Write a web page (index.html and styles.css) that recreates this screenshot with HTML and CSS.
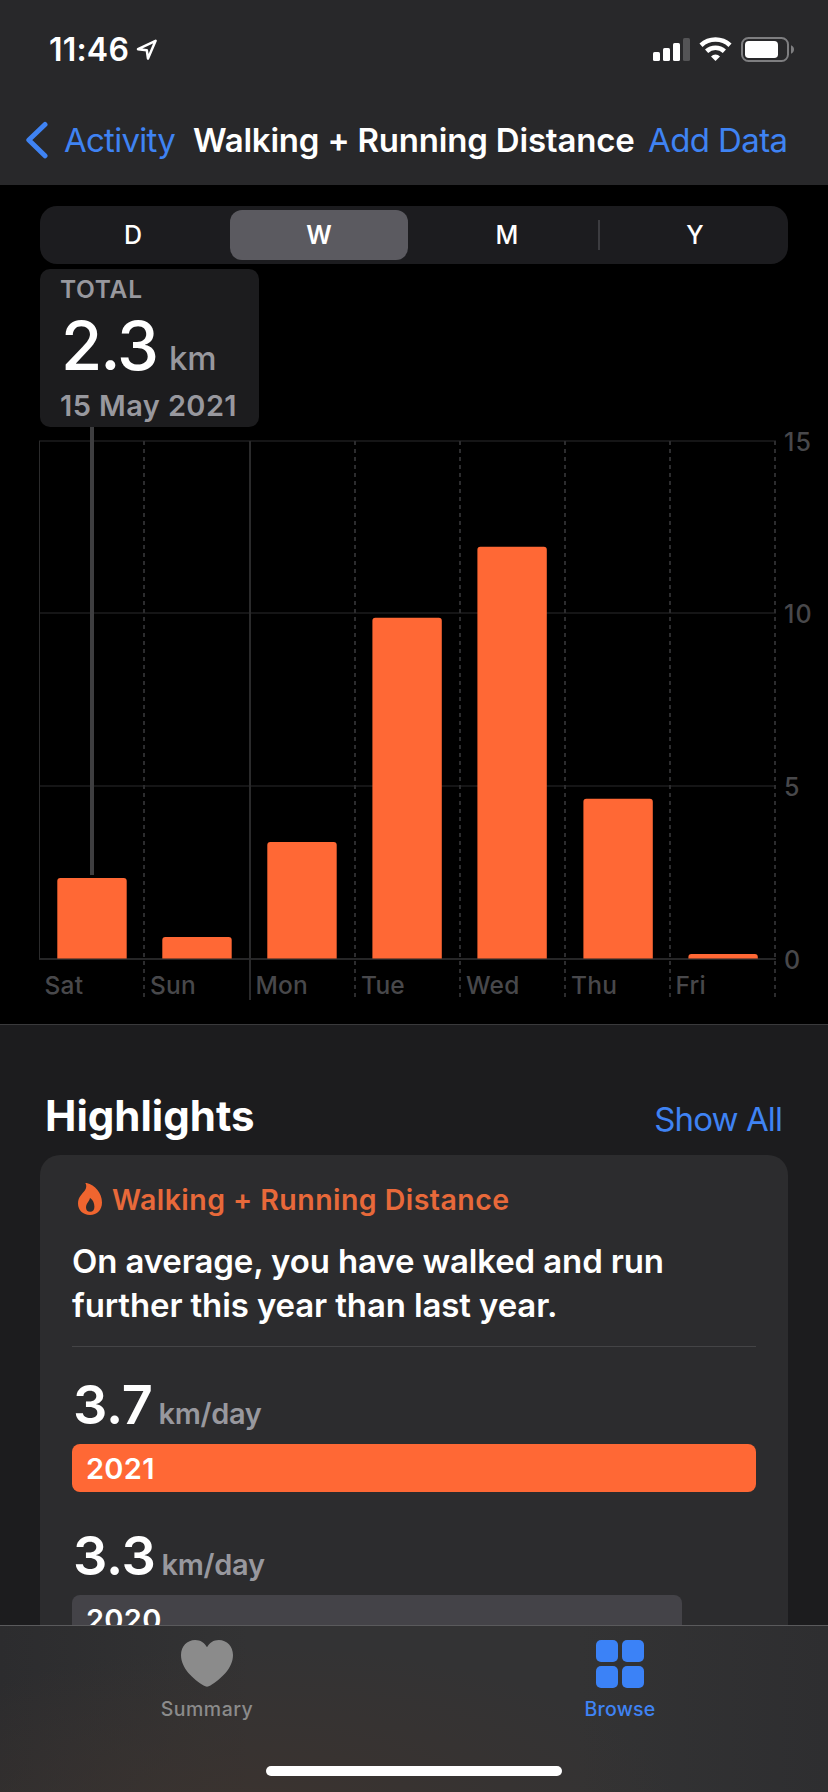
FILE: index.html
```html
<!DOCTYPE html>
<html lang="en">

<head>
    <meta charset="UTF-8">
    <meta name="viewport" content="width=device-width, initial-scale=1.0">
    <title>Walking + Running Distance</title>
    <link rel="stylesheet" href="styles.css">
</head>

<body>
    <header class="header">
        <div class="status-bar">
            <span class="time">11:46</span>
            <svg class="location" width="22" height="22" viewBox="0 0 22 22">
                <path d="M2 10.2 L19.6 1.8 L12 19.6 L10.8 11.2 Z" fill="none" stroke="#fff" stroke-width="2.5" stroke-linejoin="round" />
            </svg>
            <svg class="status-icons" width="144" height="27" viewBox="0 0 144 27">
                <g fill="#fff">
                    <rect x="1" y="16" width="7" height="9" rx="1.6" />
                    <rect x="11" y="12" width="7" height="13" rx="1.6" />
                    <rect x="21" y="7" width="7" height="18" rx="1.6" />
                    <rect x="31" y="2" width="7" height="23" rx="1.6" fill="#545456" />
                </g>
                <g fill="none" stroke="#fff" stroke-width="4.6">
                    <path d="M49 9.2 A21.5 21.5 0 0 1 78 9.2" />
                    <path d="M54.6 15.2 A13 13 0 0 1 72.4 15.2" />
                </g>
                <path d="M63.5 25 L59 20.4 A6.5 6.5 0 0 1 68 20.4 Z" fill="#fff" />
                <rect x="90" y="2" width="46" height="23" rx="6.5" fill="none" stroke="#7e7e80" stroke-width="2" />
                <rect x="93" y="5" width="33" height="17" rx="3.8" fill="#fff" />
                <path d="M139 9.3 Q142 10.6 142 13.5 Q142 16.4 139 17.7 Z" fill="#7e7e80" />
            </svg>
        </div>
        <nav class="nav">
            <svg class="chevron" width="24" height="40" viewBox="0 0 24 40">
                <path d="M21 4.5 L4.8 20 L21 35.8" fill="none" stroke="#3f83f3" stroke-width="5" stroke-linecap="round" stroke-linejoin="round" />
            </svg>
            <a class="link back">Activity</a>
            <h1 class="title">Walking + Running Distance</h1>
            <a class="link add">Add Data</a>
        </nav>
    </header>

    <main class="content">
        <section class="chart-section">
            <div class="segmented">
                <span class="segment">D</span>
                <span class="segment selected">W</span>
                <span class="segment">M</span>
                <span class="divider"></span>
                <span class="segment">Y</span>
            </div>

            <div class="summary">
                <div class="summary-label">TOTAL</div>
                <div class="summary-value">2.3<span class="summary-unit">km</span></div>
                <div class="summary-date">15 May 2021</div>
            </div>

            <svg class="chart" width="828" height="597" viewBox="0 427 828 597">
                <g class="grid-line">
                    <path d="M39 441 H776" />
                    <path d="M39 613 H776" />
                    <path d="M39 786 H776" />
                    <path class="base" d="M39 959 H776" />
                    <path class="edge" d="M39.5 441 V959" />
                </g>
                <path class="week-line" d="M250 441 V1000" />
                <g class="day-line">
                    <path d="M144 441 V997" />
                    <path d="M355 441 V997" />
                    <path d="M460 441 V997" />
                    <path d="M565 441 V997" />
                    <path d="M670 441 V997" />
                    <path d="M775 441 V997" />
                </g>
                <path class="marker" d="M92 427 V875" />
                <g class="bars">
                    <path d="M57.3 958.5 V881 q0 -3 3 -3 h63.4 q3 0 3 3 V958.5 Z" />
                    <path d="M162.3 958.5 V940 q0 -3 3 -3 h63.4 q3 0 3 3 V958.5 Z" />
                    <path d="M267.3 958.5 V845 q0 -3 3 -3 h63.4 q3 0 3 3 V958.5 Z" />
                    <path d="M372.4 958.5 V620.7 q0 -3 3 -3 h63.4 q3 0 3 3 V958.5 Z" />
                    <path d="M477.4 958.5 V549.7 q0 -3 3 -3 h63.4 q3 0 3 3 V958.5 Z" />
                    <path d="M583.4 958.5 V801.8 q0 -3 3 -3 h63.4 q3 0 3 3 V958.5 Z" />
                    <path d="M688.4 958.5 V957 q0 -3 3 -3 h63.4 q3 0 3 3 V958.5 Z" />
                </g>
                <g class="axis-label">
                    <text x="44.5" y="993.5">Sat</text>
                    <text x="150" y="993.5">Sun</text>
                    <text x="255.5" y="993.5">Mon</text>
                    <text x="361" y="993.5">Tue</text>
                    <text x="466" y="993.5">Wed</text>
                    <text x="571" y="993.5">Thu</text>
                    <text x="675.5" y="993.5">Fri</text>
                </g>
                <g class="axis-label axis-value">
                    <text x="784" y="451">15</text>
                    <text x="784" y="623">10</text>
                    <text x="784" y="796">5</text>
                    <text x="784" y="968.7">0</text>
                </g>
            </svg>
        </section>

        <section class="highlights">
            <div class="highlights-head">
                <h2>Highlights</h2>
                <a class="link show-all">Show All</a>
            </div>
            <div class="card">
                <div class="card-title">
                    <svg class="flame" width="24" height="32" viewBox="0 0 24 32">
                        <path fill-rule="evenodd" d="M7.6 0.6 C7 0 7.8 -0.1 8.6 0.1 C17 2.2 24 10.2 24 19.6 C24 27 19.2 32 12 32 C4.8 32 0 27.2 0 20.6 C0 13.5 4.6 10.8 7 7.2 C8.5 4.8 8.6 2.6 7.6 0.6 Z M12.4 15.2 C12 15 11.8 15.2 11.8 15.6 C11.4 18.6 8 20.4 8 24.4 C8 27.2 9.6 28.8 12.2 28.8 C14.8 28.8 16.4 27 16.4 23.8 C16.4 20 15 16.8 12.4 15.2 Z" fill="#f0652f" />
                    </svg>
                    <span>Walking + Running Distance</span>
                </div>
                <p class="card-text">On average, you have walked and run<br>further this year than last year.</p>
                <div class="stat">
                    <div class="stat-value">3.7<span class="stat-unit">km/day</span></div>
                    <div class="stat-bar current">2021</div>
                </div>
                <div class="stat">
                    <div class="stat-value">3.3<span class="stat-unit">km/day</span></div>
                    <div class="stat-bar previous">2020</div>
                </div>
            </div>
        </section>
    </main>

    <footer class="tab-bar">
        <div class="tabs">
            <div class="tab">
                <svg width="52" height="48" viewBox="0 0 52 48">
                    <path d="M26 7.2 C28.4 2.8 32.6 0 37.8 0 C46 0 52 6.4 52 15 C52 28.6 39.6 39 29.4 45.6 C27.2 47 24.8 47 22.6 45.6 C12.4 39 0 28.6 0 15 C0 6.4 6 0 14.2 0 C19.4 0 23.6 2.8 26 7.2 Z" fill="#8b8b8b" />
                </svg>
                <span>Summary</span>
            </div>
            <div class="tab active">
                <svg width="48" height="48" viewBox="0 0 48 48" fill="#3b82f7">
                    <rect width="22" height="22" rx="5" />
                    <rect x="26" width="22" height="22" rx="5" />
                    <rect y="26" width="22" height="22" rx="5" />
                    <rect x="26" y="26" width="22" height="22" rx="5" />
                </svg>
                <span>Browse</span>
            </div>
        </div>
        <div class="home-indicator"></div>
    </footer>
</body>

</html>
```
FILE: styles.css
```css
* {
    box-sizing: border-box;
}

body {
    margin: 0;
    width: 828px;
    height: 1792px;
    overflow: hidden;
    display: flex;
    flex-direction: column;
    background-color: #1c1c1e;
    color: #fff;
    font-family: Inter, "Liberation Sans", sans-serif;
}

h1,
h2,
p {
    margin: 0;
}

svg {
    display: block;
    flex: none;
}

.link {
    color: #3f83f3;
    font-size: 33px;
    letter-spacing: -0.75px;
}

/* Header */
.header {
    flex: none;
    height: 185px;
    background-color: #28282a;
}

.status-bar {
    display: flex;
    align-items: center;
    height: 95px;
    padding: 4px 32px 0 49px;
}

.time {
    width: 87px;
    font-size: 32px;
    font-weight: 600;
    letter-spacing: 0.2px;
}

.status-icons {
    margin-left: auto;
}

.nav {
    display: grid;
    grid-template-columns: 40px 129px 455px auto;
    align-items: center;
    height: 90px;
    padding-left: 24px;
    white-space: nowrap;
}

.title {
    font-size: 33px;
    font-weight: 600;
    letter-spacing: -0.2px;
}

.add {
    letter-spacing: -0.6px;
}

/* Chart */
.chart-section {
    height: 839px;
    padding-top: 21px;
    background-color: #000;
}

.segmented {
    display: flex;
    align-items: center;
    width: 748px;
    height: 58px;
    margin: 0 40px 5px;
    border-radius: 17px;
    background-color: #1c1c1f;
}

.segment {
    flex: 1;
    height: 50px;
    line-height: 50px;
    text-align: center;
    font-size: 25px;
    font-weight: 500;
}

.selected {
    flex: none;
    width: 178px;
    margin: 0 6px 0 4px;
    border-radius: 12px;
    background-color: #5b5a60;
    font-weight: 600;
}

.divider {
    width: 2px;
    height: 30px;
    margin: 0 2px 0 -2px;
    background-color: #3c3c40;
}

.summary {
    width: 219px;
    height: 158px;
    margin-left: 40px;
    padding-left: 20px;
    border-radius: 10px;
    background-color: #1c1c1e;
    color: #98989e;
    font-weight: 500;
    white-space: nowrap;
}

.summary-label {
    font-size: 24.5px;
    font-weight: 600;
    line-height: 40px;
    letter-spacing: 0.7px;
}

.summary-value {
    display: flex;
    align-items: baseline;
    height: 72px;
    padding-left: 1px;
    line-height: 73px;
    font-size: 67px;
    letter-spacing: -2px;
    color: #fff;
}

.summary-unit {
    margin-left: 12px;
    font-size: 33px;
    letter-spacing: -0.2px;
    color: #98989e;
}

.summary-date {
    font-size: 29px;
    font-weight: 600;
    line-height: 49px;
    letter-spacing: 0.4px;
}

.grid-line path {
    stroke: #151516;
    stroke-width: 2;
}

.grid-line .base {
    stroke: #262627;
}

.grid-line .edge {
    stroke: #2b2b2c;
    stroke-width: 1;
}

.week-line {
    stroke: #2a2a2b;
    stroke-width: 2;
}

.day-line path {
    stroke: #2c2c2e;
    stroke-width: 2;
    stroke-dasharray: 4 4;
}

.marker {
    stroke: #3e3e40;
    stroke-width: 4;
}

.bars {
    fill: #ff6835;
}

.axis-label {
    fill: #48484b;
    font-size: 24.5px;
    font-weight: 500;
    letter-spacing: 0.2px;
}

.axis-value {
    font-size: 25px;
    letter-spacing: 1.2px;
}

/* Highlights */
.content {
    flex: none;
    height: 1440px;
    overflow: hidden;
}

.highlights {
    border-top: 1px solid #3a3a3c;
    padding: 0 40px;
}

.highlights-head {
    display: flex;
    justify-content: space-between;
    align-items: baseline;
    height: 130px;
    padding: 65px 6px 0 5px;
    line-height: 51px;
}

.highlights-head h2 {
    font-size: 42px;
    font-weight: 700;
}

.show-all {
    letter-spacing: -0.9px;
}

.card {
    height: 560px;
    padding: 24px 32px;
    border-radius: 20px;
    background-color: #2c2c2e;
}

.card-title {
    display: flex;
    align-items: center;
    gap: 10px;
    height: 40px;
    padding-left: 6px;
    color: #e8693a;
    font-size: 28.5px;
    font-weight: 600;
    letter-spacing: 0.45px;
}

.card-text {
    height: 128px;
    padding-top: 20px;
    border-bottom: 1px solid #444446;
    font-size: 33px;
    font-weight: 600;
    line-height: 44px;
    letter-spacing: -0.13px;
    white-space: nowrap;
}

.stat {
    height: 151px;
    padding-top: 24px;
}

.stat-value {
    display: flex;
    align-items: baseline;
    height: 73px;
    line-height: 68px;
    padding-left: 1px;
    font-size: 54px;
    font-weight: 600;
    letter-spacing: -0.3px;
}

.stat-unit {
    margin-left: 6px;
    color: #98989e;
    font-size: 29px;
    letter-spacing: -0.3px;
}

.stat-bar {
    height: 48px;
    padding-left: 14px;
    border-radius: 8px;
    font-size: 29px;
    font-weight: 600;
    line-height: 49px;
    letter-spacing: 0.3px;
}

.current {
    background-color: #ff6835;
}

.previous {
    width: 610px;
    background-color: #444348;
}

/* Tab bar */
.tab-bar {
    flex: none;
    height: 167px;
    border-top: 1px solid #5a5a5c;
    background: radial-gradient(ellipse 420px 170px at 260px 190px, #3b332f, transparent),
        linear-gradient(to right, #2c2c2e, #333334 30%, #333334 70%, #2e2e30);
}

.tabs {
    display: grid;
    grid-template-columns: 414px 414px;
    height: 140px;
    padding-top: 14px;
}

.tab {
    display: flex;
    flex-direction: column;
    align-items: center;
    gap: 9px;
    color: #8b8b8b;
    font-size: 19.5px;
    font-weight: 500;
    letter-spacing: 0.5px;
}

.active {
    padding-right: 2px;
    color: #3f83f3;
    letter-spacing: 0.2px;
}

.home-indicator {
    width: 296px;
    height: 10px;
    margin: 0 auto;
    border-radius: 5px;
    background-color: #fff;
}
```
